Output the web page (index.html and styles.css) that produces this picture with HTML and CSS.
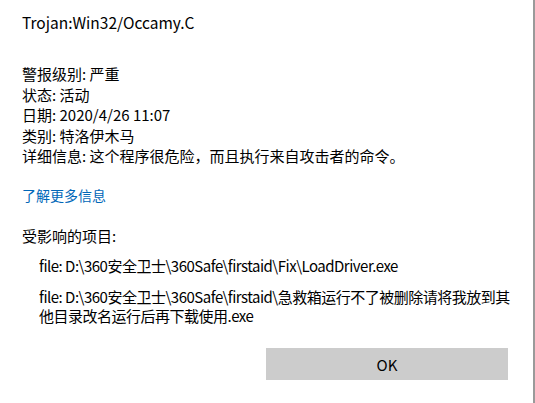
FILE: index.html
```html
<!DOCTYPE html>
<html lang="zh-CN">
<head>
<meta charset="utf-8">
<title>Trojan:Win32/Occamy.C</title>
<link rel="stylesheet" href="styles.css">
</head>
<body>
<div class="dialog">
  <div class="title">Trojan:Win32/Occamy.C</div>
  <div class="details">
    <div>警报级别: 严重</div>
    <div>状态: 活动</div>
    <div>日期: 2020/4/26 11:07</div>
    <div>类别: 特洛伊木马</div>
    <div>详细信息: 这个程序很危险，而且执行来自攻击者的命令。</div>
  </div>
  <a class="more" href="#">了解更多信息</a>
  <div class="affected">受影响的项目:</div>
  <div class="item">file: D:\360安全卫士\360Safe\firstaid\Fix\LoadDriver.exe</div>
  <div class="item item2">file: D:\360安全卫士\360Safe\firstaid\急救箱运行不了被删除请将我放到其他目录改名运行后再下载使用.exe</div>
  <div class="actions">
    <button class="ok">OK</button>
  </div>
</div>
</body>
</html>
```

FILE: styles.css
```css
html, body {
  margin: 0;
  padding: 0;
  background: #ffffff;
}
body {
  font-family: "Noto Sans CJK SC", "Noto Sans", sans-serif;
  font-size: 15px;
  color: #000000;
}
.dialog {
  box-sizing: border-box;
  width: 535px;
  height: 403px;
  border-right: 2px solid #9a9a9a;
  padding: 12px 18px 0 22px;
}
.title {
  line-height: 20px;
  font-size: 15.5px;
}
.details {
  margin-top: 32px;
  line-height: 20.5px;
}
.more {
  display: block;
  margin-top: 18.5px;
  line-height: 20px;
  font-size: 14px;
  color: #0067b8;
  text-decoration: none;
}
.affected {
  margin-top: 21px;
  line-height: 20px;
}
.item {
  margin-top: 10px;
  padding-left: 17px;
  line-height: 20px;
  letter-spacing: -0.5px;
  max-width: 475px;
}
.item2 {
  margin-top: 11px;
  line-height: 19px;
}
.actions {
  display: flex;
  justify-content: flex-end;
  margin-top: 23px;
  padding-right: 7px;
}
.ok {
  width: 242px;
  height: 32px;
  border: none;
  background: #cccccc;
  font-family: "Noto Sans CJK SC", "Noto Sans", sans-serif;
  font-size: 15px;
  color: #000000;
  padding: 0;
}
```
